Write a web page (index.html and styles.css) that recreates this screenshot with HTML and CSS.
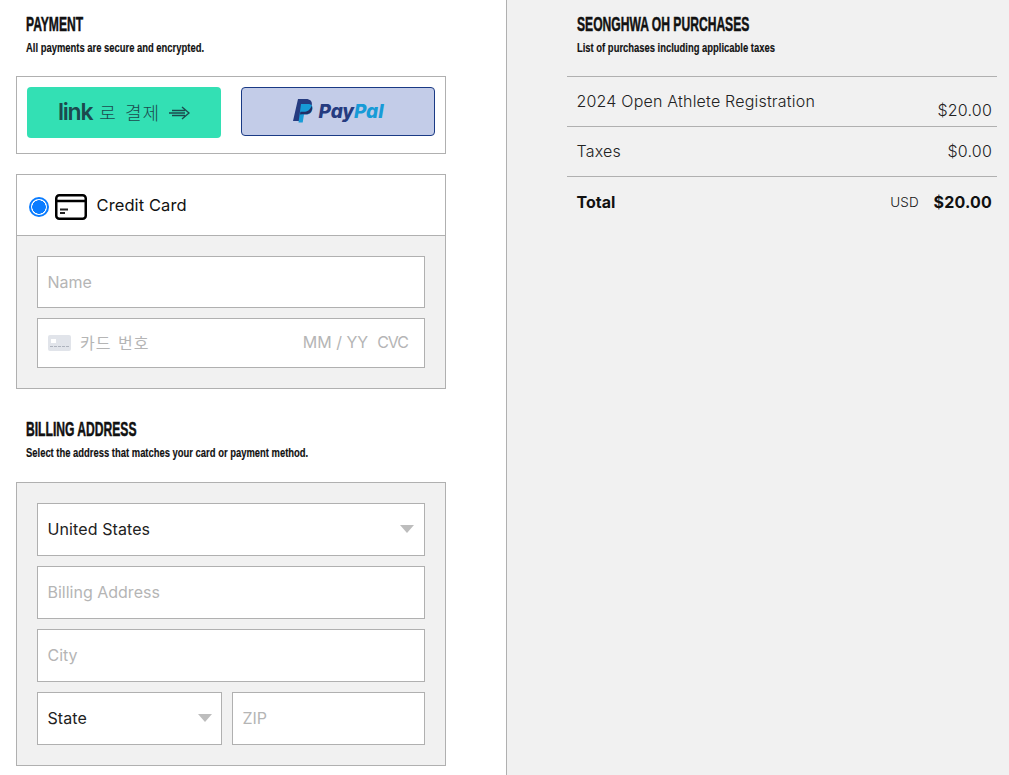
FILE: index.html
```html
<!DOCTYPE html>
<html lang="en">
<head>
<meta charset="utf-8">
<title>Payment</title>
<link rel="stylesheet" href="styles.css">
</head>
<body>
<main class="page">
  <section class="left">
    <header class="head">
      <h2 class="title">PAYMENT</h2>
      <p class="sub">All payments are secure and encrypted.</p>
    </header>
    <div class="wallets">
      <button class="wallet link-btn"><span class="link-word">link</span><span class="link-ko">로 결제</span>
        <svg class="link-arrow" width="21" height="14" viewBox="0 0 21 14"><path d="M3 4.500h13M0 7h16M3 9.500h13M13 1l7 6-7 6" fill="none" stroke="#1c4a4e" stroke-width="1.400"/></svg>
      </button>
      <button class="wallet paypal-btn">
        <svg class="pp-mark" width="20" height="24" viewBox="0 0 20 24"><path d="M5 0h8c4 0 6.500 2.300 5.800 6-.8 4.500-4 6.800-8 6.800H8L6.500 22H0z" fill="#253b80"/><path d="M8 5h7c3 0 5 1.500 4.500 5-.6 3.800-3.300 5.500-6.500 5.500h-2L9.700 23.500H5.500z" fill="#179bd7"/><path d="M7.400 12.800H11c3 0 6.400-1.800 7.500-6.100.5.800.8 2 .6 3.300-.6 3.600-3 5-5.800 5.300h-4l-2.300.100z" fill="#222d65"/></svg>
        <span class="pp-word"><span class="pp-pay">Pay</span><span class="pp-pal">Pal</span></span>
      </button>
    </div>
    <div class="card-box">
      <div class="card-head">
        <span class="radio"></span>
        <svg class="card-icon" width="32" height="26" viewBox="0 0 32 26"><rect x="1.250" y="1.250" width="29.500" height="23.500" rx="3" fill="none" stroke="#000" stroke-width="2.500"/><path d="M1 7h30" stroke="#000" stroke-width="2.500"/><path d="M5 15.500h8M5 19h5" stroke="#222" stroke-width="1.800"/></svg>
        <span class="card-label">Credit Card</span>
      </div>
      <div class="card-body">
        <div class="field tall ph">Name</div>
        <div class="field number">
          <svg class="num-icon" width="23" height="16" viewBox="0 0 23 16"><rect width="23" height="16" rx="2" fill="#e1e4ea"/><rect x="3" y="4" width="5" height="4" fill="#fff"/><path d="M2 11.500h19" stroke="#aeb3bd" stroke-dasharray="3 1"/></svg>
          <span class="ph num-text">카드 번호</span>
          <span class="ph exp">MM / YY</span>
          <span class="ph cvc">CVC</span>
        </div>
      </div>
    </div>
    <header class="head billing-head">
      <h2 class="title">BILLING ADDRESS</h2>
      <p class="sub">Select the address that matches your card or payment method.</p>
    </header>
    <div class="address-box">
      <div class="field tall select"><span>United States</span><i class="caret"></i></div>
      <div class="field tall ph">Billing Address</div>
      <div class="field tall ph">City</div>
      <div class="row">
        <div class="field tall select state"><span>State</span><i class="caret"></i></div>
        <div class="field tall ph zip">ZIP</div>
      </div>
    </div>
  </section>
  <aside class="right">
    <header class="head">
      <h2 class="title">SEONGHWA OH PURCHASES</h2>
      <p class="sub">List of purchases including applicable taxes</p>
    </header>
    <div class="summary">
      <div class="line first"><span class="item">2024 Open Athlete Registration</span><span class="price low">$20.00</span></div>
      <div class="line"><span class="item">Taxes</span><span class="price">$0.00</span></div>
      <div class="line total"><strong class="total-label">Total</strong><span class="total-val"><span class="usd">USD</span><strong>$20.00</strong></span></div>
    </div>
  </aside>
</main>
</body>
</html>
```
FILE: styles.css
```css
* { box-sizing: border-box; }
html, body { margin: 0; height: 775px; overflow: hidden; background: #fff; }
body { font-family: Inter, "Noto Sans CJK KR", sans-serif; color: #111; font-size: 16px; }
.page { display: grid; grid-template-columns: 506px 503px; height: 775px; }
.left { padding: 0 60px 0 16px; }
.right { background: #f1f1f1; border-left: 1px solid #b0b0b0; padding-left: 60px; padding-right: 12px; }
.head { padding: 14px 0 0 10px; height: 76px; }
.title { margin: 0; font: 700 20px/21px "Liberation Sans", sans-serif; color: #111; -webkit-text-stroke: .5px #111; display: block; transform: scaleX(.605); transform-origin: 0 0; white-space: nowrap; }
.sub { margin: 5px 0 0; font: 700 12px/16px "Liberation Sans", sans-serif; color: #111; -webkit-text-stroke: .15px #111; transform: scaleX(.785); transform-origin: 0 0; white-space: nowrap; }
.wallets { height: 78px; border: 1px solid #b0b0b0; padding: 10px; display: flex; justify-content: space-between; align-items: flex-start; }
.wallet { width: 194px; margin: 0; padding: 0; display: flex; align-items: center; justify-content: center; font-family: inherit; }
.link-btn { height: 51px; background: #33e0b4; border: 0; border-radius: 4px; color: #1c4a4e; }
.link-word { font: 600 23px/1 Inter, sans-serif; letter-spacing: -1.200px; color: #1c4a4e; }
.link-ko { font: 300 18px/1 "Noto Sans CJK KR", sans-serif; margin-left: 7px; margin-bottom: 2px; word-spacing: 3px; letter-spacing: 1px; }
.link-arrow { margin-left: 9px; }
.paypal-btn { height: 49px; background: #c3cce8; border: 1px solid #1a3a85; border-radius: 4px; gap: 6px; }
.pp-mark { margin-bottom: 2px; }
.pp-word { font: italic 800 19px/1 Inter, sans-serif; letter-spacing: -.1px; }
.pp-pay { color: #253b80; }
.pp-pal { color: #179bd7; }
.card-box { margin-top: 20px; height: 215px; border: 1px solid #b0b0b0; }
.card-head { height: 61px; display: flex; align-items: center; padding-left: 12px; background: #fff; border-bottom: 1px solid #b0b0b0; }
.radio { width: 20px; height: 20px; border-radius: 50%; border: 2px solid #0a7cff; background: radial-gradient(circle, #0a7cff 0 6.500px, #fff 7px); margin-top: 4px; }
.card-icon { margin-left: 6px; margin-top: 3px; }
.card-label { margin-left: 9.500px; font-size: 16.500px; letter-spacing: .1px; color: #111; margin-bottom: 1px; }
.card-body { background: #f1f1f1; height: 152px; padding: 20px 20px 0; display: flex; flex-direction: column; gap: 10px; }
.field { background: #fff; border: 1px solid #b0b0b0; display: flex; align-items: center; padding-left: 9.500px; font-size: 16px; }
.tall { height: 53px; padding-bottom: 2px; }
.card-body .tall { height: 52px; padding-bottom: 0; }
.number { height: 50px; padding-bottom: 3px; }
.ph { color: #b5b5b5; }
.num-icon { margin-right: 9.500px; margin-top: 2px; }
.num-text { font: 400 16px/1 "Noto Sans CJK KR", sans-serif; word-spacing: 2px; letter-spacing: 1px; }
.exp { margin-left: auto; }
.cvc { margin-left: 9px; margin-right: 16px; letter-spacing: -1px; }
.billing-head { margin-top: 29px; height: 64px; padding-top: 1px; }
.address-box { height: 284px; background: #f1f1f1; border: 1px solid #b0b0b0; padding: 20px 20px 0; display: flex; flex-direction: column; gap: 10px; }
.select { justify-content: space-between; color: #222; padding-right: 10px; letter-spacing: .1px; }
.caret { width: 0; height: 0; border-left: 7px solid transparent; border-right: 7px solid transparent; border-top: 8px solid #bdbdbd; }
.row { display: flex; gap: 10px; }
.state { width: 185px; padding-right: 9px; }
.zip { flex: 1; }
.summary { margin-right: -1px; margin-left: 0; width: 430px; }
.line { height: 50px; border-top: 1px solid #b0b0b0; display: flex; justify-content: space-between; padding: 0 5px 0 9.500px; align-items: center; color: #222; font-weight: 300; letter-spacing: .2px; padding-bottom: 1px; }
.first { align-items: flex-start; padding-top: 14px; }
.item { line-height: 20px; }
.price { line-height: 20px; }
.low { margin-top: 9px; }
.total { color: #111; padding-bottom: 0; padding-top: 1px; }
.total-label { font-weight: 700; letter-spacing: 0; }
.total-val { display: flex; align-items: center; gap: 14.500px; }
.usd { font-size: 13.500px; font-weight: 300; }
.total-val strong { font-weight: 700; letter-spacing: .2px; }
```
